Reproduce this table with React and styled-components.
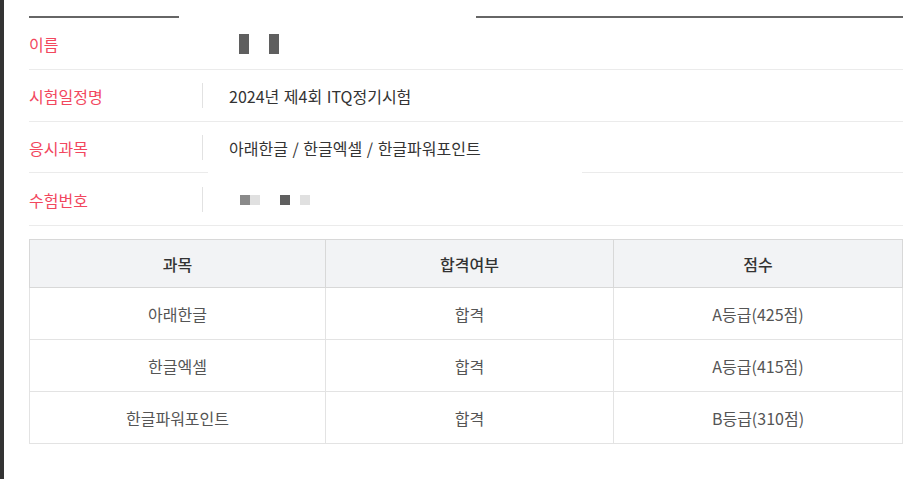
import React from 'react';
import styled, { createGlobalStyle } from 'styled-components';

const GlobalStyle = createGlobalStyle`
  html, body {
    margin: 0;
    padding: 0;
    background: #fff;
  }
  body {
    font-family: "Noto Sans CJK KR", "Noto Sans", sans-serif;
    -webkit-font-smoothing: antialiased;
  }
`;

const Page = styled.div`
  display: flex;
  width: 908px;
  height: 479px;
  overflow: hidden;
`;

const Strip = styled.div`
  width: 4px;
  flex: 0 0 4px;
  background: #333;
`;

const Content = styled.div`
  flex: 1;
  padding: 16px 7px 0 25px;
`;

const TopRule = styled.div`
  display: flex;
  justify-content: space-between;
  height: 2px;
`;

const RuleSeg = styled.div`
  width: ${({ w }) => w}px;
  background: #666;
`;

const InfoRow = styled.div`
  display: flex;
  align-items: center;
  height: 51px;
  border-bottom: 1px solid ${({ split }) => (split ? 'transparent' : '#ebebeb')};
  background: ${({ split }) =>
    split
      ? 'linear-gradient(to right, #ebebeb 0 179px, transparent 179px 553px, #ebebeb 553px) bottom / 100% 1px no-repeat'
      : 'none'};
`;

const Label = styled.div`
  width: 173px;
  flex: 0 0 173px;
  font-size: 16px;
  color: #f2475e;
  line-height: 1;
`;

const Divider = styled.div`
  width: 1px;
  height: 25px;
  background: ${({ hidden }) => (hidden ? 'transparent' : '#e2e2e2')};
`;

const Value = styled.div`
  display: flex;
  align-items: center;
  padding-left: 26px;
  font-size: 16px;
  color: #333;
  line-height: 1;
  word-spacing: 1px;
`;

const Blot = styled.span`
  display: inline-block;
  width: 10px;
  height: ${({ h }) => h}px;
  margin-left: ${({ ml }) => ml || 0}px;
  background: ${({ c }) => c};
`;

const Table = styled.table`
  margin-top: 13px;
  width: 873px;
  border-collapse: collapse;
  table-layout: fixed;
  font-size: 16px;
`;

const Th = styled.th`
  height: 47px;
  padding: 0;
  background: #f2f3f5;
  border: 1px solid #d8d8d8;
  font-weight: 500;
  color: #333;
`;

const Td = styled.td`
  height: 51px;
  padding: 0;
  text-align: center;
  border: 1px solid #e3e3e3;
  color: #555;
`;

const rows = [
  ['아래한글', '합격', 'A등급(425점)'],
  ['한글엑셀', '합격', 'A등급(415점)'],
  ['한글파워포인트', '합격', 'B등급(310점)'],
];

export default function App() {
  return (
    <>
      <GlobalStyle />
      <Page>
        <Strip />
        <Content>
          <TopRule>
            <RuleSeg w={150} />
            <RuleSeg w={427} />
          </TopRule>

          <InfoRow>
            <Label>이름</Label>
            <Divider hidden />
            <Value>
              <Blot h={20} c="#5f5f5f" ml={11} />
              <Blot h={20} c="#5f5f5f" ml={20} />
            </Value>
          </InfoRow>

          <InfoRow>
            <Label>시험일정명</Label>
            <Divider />
            <Value>2024년 제4회 ITQ정기시험</Value>
          </InfoRow>

          <InfoRow split>
            <Label>응시과목</Label>
            <Divider />
            <Value>아래한글 / 한글엑셀 / 한글파워포인트</Value>
          </InfoRow>

          <InfoRow>
            <Label>수험번호</Label>
            <Divider />
            <Value>
              <Blot h={10} c="#8a8a8a" ml={11} />
              <Blot h={10} c="#e0e0e0" />
              <Blot h={10} c="#5f5f5f" ml={20} />
              <Blot h={10} c="#e0e0e0" ml={10} />
            </Value>
          </InfoRow>

          <Table>
            <colgroup>
              <col style={{ width: 296 }} />
              <col style={{ width: 288 }} />
              <col style={{ width: 289 }} />
            </colgroup>
            <thead>
              <tr>
                <Th>과목</Th>
                <Th>합격여부</Th>
                <Th>점수</Th>
              </tr>
            </thead>
            <tbody>
              {rows.map((r) => (
                <tr key={r[0]}>
                  {r.map((c, i) => (
                    <Td key={i}>{c}</Td>
                  ))}
                </tr>
              ))}
            </tbody>
          </Table>
        </Content>
      </Page>
    </>
  );
}
